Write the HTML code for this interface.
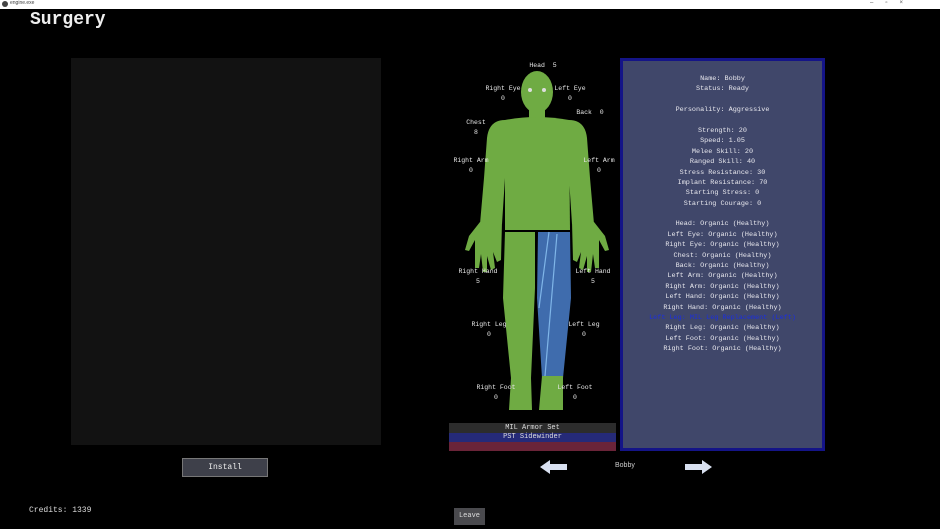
<!DOCTYPE html>
<html><head><style>
body{margin:0;width:940px;height:529px;background:#000;position:relative;overflow:hidden;font-family:"Liberation Mono",monospace;color:#ddd}
.a{position:absolute}
.l{position:absolute;font-size:6.5px;color:#e8e8e8;text-align:center;width:60px;line-height:10px}
#info{left:620px;top:58px;width:199px;height:387px;background:#40476a;border:3px solid #141487}
#info div{font-size:6.8px;text-align:center;line-height:10.4px;height:10.4px;color:#e8e8ee}
</style></head><body>
<div class="a" style="left:0;top:0;width:940px;height:9px;background:#fff"></div>
<div class="a" style="left:2px;top:1px;width:6px;height:6px;border-radius:3px;background:#444"></div>
<div class="a" style="left:10px;top:0;font-size:5px;color:#444;font-family:'Liberation Sans'">engine.exe</div>
<div class="a" style="left:870px;top:0;font-size:6px;color:#555;font-family:'Liberation Sans';letter-spacing:12px">–▫×</div>
<div class="a" style="left:30px;top:10px;font-size:18px;font-weight:bold;color:#eee">Surgery</div>
<div class="a" style="left:71px;top:58px;width:310px;height:387px;background:#121212"></div>
<div class="a" style="left:182px;top:458px;width:84px;height:17px;background:#3e404a;border:1px solid #777;font-size:8px;text-align:center;line-height:17px;color:#eee">Install</div>
<div class="a" style="left:29px;top:506px;font-size:8px;color:#ddd">Credits: 1339</div>
<svg class="a" style="left:449px;top:58px" width="170" height="365">
<g fill="#6fab43">
<ellipse cx="88" cy="34" rx="16" ry="21"/>
<rect x="80" y="48" width="16" height="16"/>
<path d="M56 62 Q88 56 120 62 L121 172 L56 172 Z"/>
<path d="M56 62 Q40 62 38 80 L35 120 L31 166 L53 166 L56 120 Z"/>
<path d="M120 62 Q136 62 138 80 L141 120 L145 166 L123 166 L120 120 Z"/>
<path d="M31 164 L20 178 L16 192 L20 193 L26 182 L26 210 L30 210 L32 196 L34 214 L38 214 L38 198 L42 212 L46 210 L44 194 L48 204 L52 202 L53 164 Z"/>
<path d="M145 164 L156 178 L160 192 L156 193 L150 182 L150 210 L146 210 L144 196 L142 214 L138 214 L138 198 L134 212 L130 210 L132 194 L128 204 L124 202 L123 164 Z"/>
<path d="M56 174 L86 174 L86 230 L82 320 L83 352 L60 352 L62 320 L54 240 Z"/>
</g>
<path d="M89 174 L121 174 L122 240 L114 320 L93 320 L88 240 Z" fill="#3f6cad"/>
<path d="M100 174 L90 250 M108 176 L96 318" stroke="#7fb5e8" stroke-width="1.2"/>
<path d="M93 318 L114 318 L114 352 L90 352Z" fill="#6fab43"/>
<circle cx="81" cy="32" r="2" fill="#ddd"/><circle cx="95" cy="32" r="2" fill="#ddd"/>
</svg>
<div class="l" style="left:523px;top:61px;width:40px">Head &nbsp;5</div>
<div class="l" style="left:473px;top:84px">Right Eye<br>0</div>
<div class="l" style="left:540px;top:84px">Left Eye<br>0</div>
<div class="l" style="left:570px;top:108px;width:40px">Back &nbsp;0</div>
<div class="l" style="left:446px;top:118px">Chest<br>8</div>
<div class="l" style="left:441px;top:156px">Right Arm<br>0</div>
<div class="l" style="left:569px;top:156px">Left Arm<br>0</div>
<div class="l" style="left:448px;top:267px">Right Hand<br>5</div>
<div class="l" style="left:563px;top:267px">Left Hand<br>5</div>
<div class="l" style="left:459px;top:320px">Right Leg<br>0</div>
<div class="l" style="left:554px;top:320px">Left Leg<br>0</div>
<div class="l" style="left:466px;top:383px">Right Foot<br>0</div>
<div class="l" style="left:545px;top:383px">Left Foot<br>0</div>
<div class="a" style="left:449px;top:423px;width:167px;height:10px;background:#2c2c2c;font-size:7px;text-align:center;line-height:10px">MIL Armor Set</div>
<div class="a" style="left:449px;top:433px;width:167px;height:9px;background:#252a78;font-size:7px;text-align:center;line-height:9px">PST Sidewinder</div>
<div class="a" style="left:449px;top:442px;width:167px;height:9px;background:#6a2438"></div>
<div id="info" class="a">
<div style="margin-top:13px">Name: Bobby</div><div>Status: Ready</div><div></div>
<div>Personality: Aggressive</div><div></div>
<div>Strength: 20</div><div>Speed: 1.05</div><div>Melee Skill: 20</div><div>Ranged Skill: 40</div><div>Stress Resistance: 30</div><div>Implant Resistance: 70</div><div>Starting Stress: 0</div><div>Starting Courage: 0</div><div></div>
<div>Head: Organic (Healthy)</div><div>Left Eye: Organic (Healthy)</div><div>Right Eye: Organic (Healthy)</div><div>Chest: Organic (Healthy)</div><div>Back: Organic (Healthy)</div><div>Left Arm: Organic (Healthy)</div><div>Right Arm: Organic (Healthy)</div><div>Left Hand: Organic (Healthy)</div><div>Right Hand: Organic (Healthy)</div>
<div style="color:#1a2ee0">Left Leg: MIL Leg Replacement (Left)</div>
<div>Right Leg: Organic (Healthy)</div><div>Left Foot: Organic (Healthy)</div><div>Right Foot: Organic (Healthy)</div>
</div>
<svg class="a" style="left:539px;top:459px" width="30" height="16"><path d="M1 8 L11 1 L11 5 L28 5 L28 11 L11 11 L11 15Z" fill="#d8e0f0"/></svg>
<svg class="a" style="left:683px;top:459px" width="30" height="16"><path d="M29 8 L19 1 L19 5 L2 5 L2 11 L19 11 L19 15Z" fill="#d8e0f0"/></svg>
<div class="a" style="left:615px;top:462px;font-size:7px;color:#ccc;font-family:'Liberation Sans'">Bobby</div>
<div class="a" style="left:454px;top:508px;width:31px;height:17px;background:#4a4a4e;font-size:7px;text-align:center;line-height:17px;color:#ddd">Leave</div>
</body></html>
